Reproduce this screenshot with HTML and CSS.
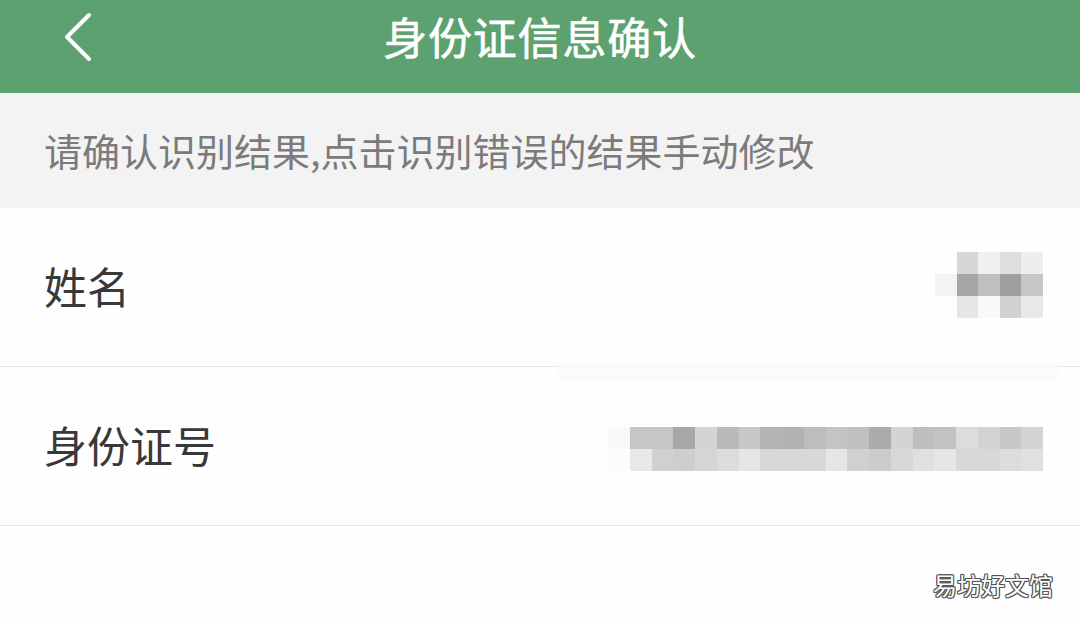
FILE: index.html
```html
<!DOCTYPE html>
<html lang="zh-CN">
<head>
<meta charset="utf-8">
<title>身份证信息确认</title>
<link rel="stylesheet" href="styles.css">
</head>
<body>
<header class="topbar">
  <div class="topbar-left">
    <button class="back" aria-label="返回">
      <svg width="30" height="50" viewBox="0 0 30 50"><polyline points="25,3 3,25 25,47" fill="none" stroke="#fff" stroke-width="4" stroke-linecap="round" stroke-linejoin="round"/></svg>
    </button>
  </div>
  <h1 class="title">身份证信息确认</h1>
  <div class="topbar-right"></div>
</header>
<p class="hint">请确认识别结果,点击识别错误的结果手动修改</p>
<ul class="fields">
  <li class="field">
    <span class="label">姓名</span>
    <div class="mosaic mosaic-name">
      <i style="background:#fdfdfd"></i><i style="background:#d6d6d6"></i><i style="background:#f0f0f0"></i><i style="background:#dedede"></i><i style="background:#eeeeee"></i>
      <i style="background:#f3f3f3"></i><i style="background:#a6a6a6"></i><i style="background:#c0c0c0"></i><i style="background:#9f9f9f"></i><i style="background:#c6c6c6"></i>
      <i style="background:#fefefe"></i><i style="background:#e6e6e6"></i><i style="background:#f9f9f9"></i><i style="background:#d1d1d1"></i><i style="background:#e8e8e8"></i>
    </div>
  </li>
  <li class="field field-id">
    <span class="label">身份证号</span>
    <div class="mosaic mosaic-id">
      <i style="background:#f8f8f8"></i><i style="background:#c6c6c6"></i><i style="background:#c6c6c6"></i><i style="background:#a8a8a8"></i><i style="background:#d4d4d4"></i><i style="background:#bababa"></i><i style="background:#c8c8c8"></i><i style="background:#b4b4b4"></i><i style="background:#b2b2b2"></i><i style="background:#bdbdbd"></i><i style="background:#c4c4c4"></i><i style="background:#c0c0c0"></i><i style="background:#ababab"></i><i style="background:#d4d4d4"></i><i style="background:#bebebe"></i><i style="background:#c2c2c2"></i><i style="background:#dcdcdc"></i><i style="background:#d2d2d2"></i><i style="background:#c8c8c8"></i><i style="background:#d4d4d4"></i>
      <i style="background:#fcfcfc"></i><i style="background:#e8e8e8"></i><i style="background:#d0d0d0"></i><i style="background:#cecece"></i><i style="background:#d6d6d6"></i><i style="background:#dcdcdc"></i><i style="background:#e6e6e6"></i><i style="background:#d8d8d8"></i><i style="background:#d8d8d8"></i><i style="background:#d8d8d8"></i><i style="background:#e6e6e6"></i><i style="background:#d0d0d0"></i><i style="background:#cccccc"></i><i style="background:#d8d8d8"></i><i style="background:#e0e0e0"></i><i style="background:#e6e6e6"></i><i style="background:#d8d8d8"></i><i style="background:#d8d8d8"></i><i style="background:#dcdcdc"></i><i style="background:#e0e0e0"></i>
    </div>
    <span class="patch"></span>
  </li>
</ul>
<footer class="footer">
  <span class="watermark">易坊好文馆</span>
</footer>
</body>
</html>
```

FILE: styles.css
```css
html, body {
  margin: 0;
  padding: 0;
}
body {
  width: 1080px;
  height: 621px;
  overflow: hidden;
  background: #fefefe;
  font-family: "Noto Sans CJK SC", "Noto Sans", sans-serif;
}
.topbar {
  height: 72px;
  padding-bottom: 21px;
  background: #5da170;
  display: grid;
  grid-template-columns: 1fr auto 1fr;
  align-items: center;
}
.topbar-left {
  display: flex;
  align-items: center;
  padding-left: 64px;
  padding-top: 2px;
}
.back {
  border: 0;
  background: none;
  padding: 0;
  width: 30px;
  height: 50px;
  display: flex;
}
.title {
  margin: 0;
  color: #fff;
  font-size: 44px;
  font-weight: 400;
  line-height: 72px;
  letter-spacing: 0.8px;
  -webkit-text-stroke: 0.6px #fff;
}
.hint {
  margin: 0;
  height: 115px;
  box-sizing: border-box;
  padding: 0 0 2px 44px;
  background: #f3f3f3;
  color: #7b7b7b;
  font-size: 38px;
  display: flex;
  align-items: center;
}
.fields {
  list-style: none;
  margin: 0;
  padding: 0;
}
.field {
  position: relative;
  height: 158px;
  border-bottom: 1px solid #e6e6e6;
  display: flex;
  align-items: center;
  justify-content: space-between;
  padding: 0 37px 0 44px;
}
.label {
  font-size: 43px;
  color: #383838;
  margin-bottom: 4px;
}
.mosaic {
  display: grid;
  grid-auto-rows: 22px;
}
.mosaic i {
  display: block;
}
.mosaic-name {
  grid-template-columns: repeat(5, 21.6px);
  margin-bottom: 4px;
}
.mosaic-id {
  grid-template-columns: repeat(20, 21.75px);
  margin-top: 5px;
}
.patch {
  position: absolute;
  left: 558px;
  top: -5px;
  width: 500px;
  height: 20px;
  background: #fbfbfb;
}
.footer {
  display: flex;
  justify-content: flex-end;
  padding: 44px 27px 0 0;
}
.watermark {
  font-size: 24px;
  line-height: 30px;
  color: #fff;
  text-shadow: 1px 0 0 #555, -1px 0 0 #555, 0 1px 0 #555, 0 -1px 0 #555, 1px 1px 0 #555, -1px -1px 0 #555, 1px -1px 0 #555, -1px 1px 0 #555;
}
```
